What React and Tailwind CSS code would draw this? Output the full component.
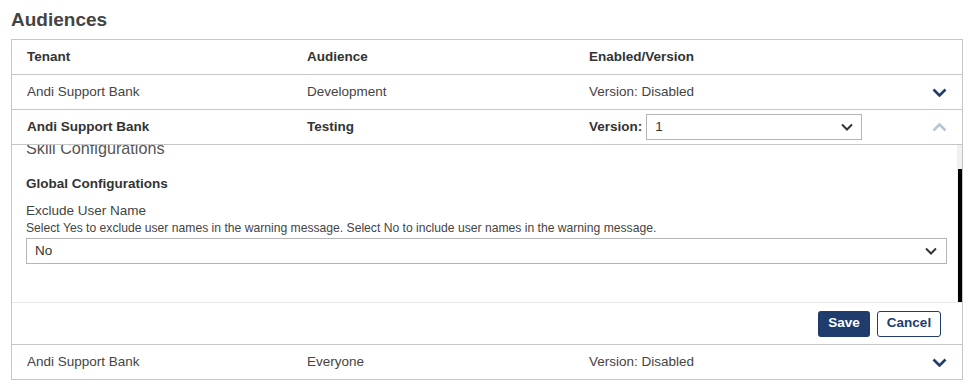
import React from "react";

function Chevron({ up = false, className = "" }) {
  return (
    <svg width="15" height="9" viewBox="0 0 15 9" className={className}>
      <path
        d={up ? "M1.5 7.5 L7.5 1.5 L13.5 7.5" : "M1.5 1.5 L7.5 7.5 L13.5 1.5"}
        fill="none"
        stroke="currentColor"
        strokeWidth="2.6"
      />
    </svg>
  );
}

function SelectChevron() {
  return (
    <svg width="12" height="8" viewBox="0 0 12 8" className="text-[#333]">
      <path d="M1 1.5 L6 6.5 L11 1.5" fill="none" stroke="currentColor" strokeWidth="2" />
    </svg>
  );
}

function Row({ tenant, audience, children, bold = false, last = false, right }) {
  return (
    <div
      className={`flex items-center ${last ? "h-[34px]" : "h-[35px] border-b border-[#c6c6c6]"} text-[13.5px] leading-[18px] ${
        bold ? "font-bold text-[#333]" : "text-[#444]"
      }`}
    >
      <div className="w-[280px] pl-[15px]">{tenant}</div>
      <div className="w-[282px] pl-[15px]">{audience}</div>
      <div className="flex-1 pl-[15px] flex items-center">{children}</div>
      <div className="w-[15px] mr-[15px] flex items-center">{right}</div>
    </div>
  );
}

export default function App() {
  return (
    <div className="min-h-screen bg-white font-['Liberation_Sans',Arial,sans-serif] px-[11px] pt-[9px]">
      <h2 className="text-[19px] leading-[22px] font-bold text-[#444]">Audiences</h2>

      <div className="mt-[8px] w-[952px] border border-[#c6c6c6]">
        <Row tenant="Tenant" audience="Audience" bold>
          Enabled/Version
        </Row>

        <Row
          tenant="Andi Support Bank"
          audience="Development"
          right={<Chevron className="text-[#1f3c6d]" />}
        >
          Version: Disabled
        </Row>

        <Row
          tenant="Andi Support Bank"
          audience="Testing"
          bold
          right={<Chevron up className="text-[#b9c5d5]" />}
        >
          <span>Version:</span>
          <div className="ml-[4px] w-[216px] h-[26px] border border-[#b5b5b5] flex items-center justify-between pl-[8px] pr-[8px] font-normal text-[#333]">
            <span>1</span>
            <SelectChevron />
          </div>
        </Row>

        {/* expanded panel, scrolled a little */}
        <div className="flex h-[157px] overflow-hidden">
          <div className="flex-1 pl-[14px] pr-[10px] text-[#444]">
            <div className="-mt-[7px] text-[16.2px] leading-[20px] text-[#555]">Skill Configurations</div>
            <div className="mt-[17px] text-[13.5px] leading-[18px] font-bold text-[#333]">
              Global Configurations
            </div>
            <div className="mt-[9px] text-[13.5px] leading-[18px]">Exclude User Name</div>
            <div className="mt-[1px] text-[12.15px] leading-[14px]">
              Select Yes to exclude user names in the warning message. Select No to include user names in the warning
              message.
            </div>
            <div className="mt-[3px] h-[26px] border border-[#b5b5b5] flex items-center justify-between pl-[8px] pr-[9px] text-[13.5px] leading-[18px] text-[#333]">
              <span>No</span>
              <SelectChevron />
            </div>
          </div>
          <div className="w-[5px] bg-[#f1f1f1] pt-[24px]">
            <div className="ml-[1px] w-[4px] h-full bg-black" />
          </div>
        </div>

        <div className="h-[43px] border-t border-b border-t-[#e8e8e8] border-b-[#c6c6c6] flex items-center justify-end gap-[7px] pr-[21px]">
          <button className="w-[52px] h-[26px] rounded-[3px] bg-[#1f3c6d] text-white text-[13.5px] font-bold">
            Save
          </button>
          <button className="w-[64px] h-[26px] rounded-[3px] border border-[#1f3c6d] bg-white text-[#1f3c6d] text-[13.5px] font-bold">
            Cancel
          </button>
        </div>

        <Row
          tenant="Andi Support Bank"
          audience="Everyone"
          last
          right={<Chevron className="text-[#1f3c6d]" />}
        >
          Version: Disabled
        </Row>
      </div>
    </div>
  );
}
